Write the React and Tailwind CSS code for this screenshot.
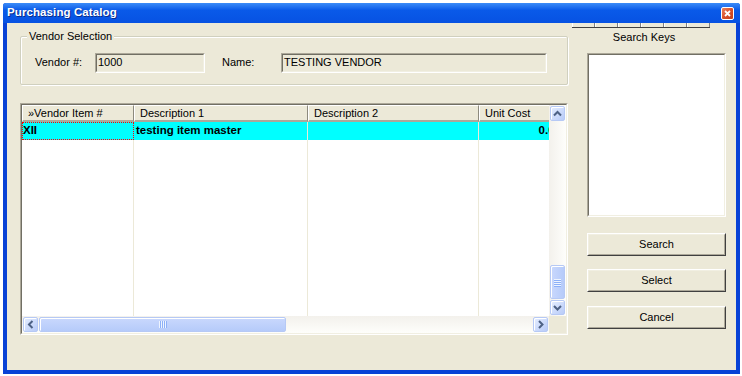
import React from "react";

function Chevron({ dir }) {
  const paths = {
    up: "M1 5.5 L4.5 2 L8 5.5",
    down: "M1 2 L4.5 5.5 L8 2",
    left: "M5.5 1 L2 4.5 L5.5 8",
    right: "M2 1 L5.5 4.5 L2 8",
  };
  const vertical = dir === "up" || dir === "down";
  return (
    <svg
      width={vertical ? 9 : 7}
      height={vertical ? 7 : 9}
      viewBox={vertical ? "0 0 9 7" : "0 0 7 9"}
    >
      <path d={paths[dir]} fill="none" stroke="#4D6185" strokeWidth="2" />
    </svg>
  );
}

function ScrollBtn({ dir }) {
  return (
    <div className="w-[17px] h-[17px] shrink-0 p-px">
      <div className="w-full h-full rounded-[2px] border border-[#B6C9F5] bg-linear-to-br from-[#E6EEFF] to-[#B8CBF8] flex items-center justify-center shadow-[inset_1px_1px_0_#fff]">
        <Chevron dir={dir} />
      </div>
    </div>
  );
}

function Grip({ vertical }) {
  return vertical ? (
    <div className="flex flex-col gap-px">
      {[0, 1, 2, 3].map((i) => (
        <div key={i} className="w-[7px] h-px bg-[#EEF4FE] shadow-[0_1px_0_#8CB0F8]" />
      ))}
    </div>
  ) : (
    <div className="flex flex-row gap-px">
      {[0, 1, 2, 3].map((i) => (
        <div key={i} className="w-px h-[7px] bg-[#EEF4FE] shadow-[1px_0_0_#8CB0F8]" />
      ))}
    </div>
  );
}

function Sunken({ className = "", children }) {
  return (
    <div
      className={
        "border border-t-[#ACA899] border-l-[#ACA899] border-b-white border-r-white " +
        className
      }
    >
      <div className="w-full h-full border border-t-[#716F64] border-l-[#716F64] border-b-[#F1EFE2] border-r-[#F1EFE2]">
        {children}
      </div>
    </div>
  );
}

function Field({ w, text }) {
  return (
    <Sunken className={w + " h-[20px]"}>
      <div className="h-full flex items-center pl-[1px] text-[11px] text-black leading-none">
        {text}
      </div>
    </Sunken>
  );
}

function Button({ label, mt }) {
  return (
    <div
      className={
        "w-[139px] h-[23px] border border-t-white border-l-white border-b-[#404040] border-r-[#404040] " +
        mt
      }
    >
      <div className="w-full h-full border border-t-[#F1EFE2] border-l-[#F1EFE2] border-b-[#ACA899] border-r-[#ACA899] flex items-center justify-center text-[11px] text-black">
        {label}
      </div>
    </div>
  );
}

const cols = [
  { w: "w-[112px]", head: "»Vendor Item #", val: "XII", focus: true },
  { w: "w-[174px]", head: "Description 1", val: "testing item master" },
  { w: "w-[171px]", head: "Description 2", val: "" },
  { w: "w-[85px]", head: "Unit Cost", val: "0.00", right: true, last: true },
];

export default function App() {
  return (
    <div className="w-[742px] h-[376px] bg-white pl-[3px] pt-[3px] overflow-hidden font-['Liberation_Sans',Arial,sans-serif]">
      <div className="w-[737px] h-[371px] bg-[#0842D6] flex flex-col rounded-t-[3px]">
        {/* Title bar */}
        <div className="h-[20px] shrink-0 flex items-center justify-between pl-[4px] pr-[6px] bg-linear-to-b from-[#3B8BF7] via-[#0A5AE9] via-35% to-[#0752E2] rounded-t-[3px]">
          <span className="text-white font-bold text-[11.5px] tracking-[0.1px] [text-shadow:1px_1px_0_#0A2E8C]">
            Purchasing Catalog
          </span>
          <div className="mt-px w-[13px] h-[13px] rounded-[2px] border border-white bg-linear-to-br from-[#E9835F] via-[#D9502A] to-[#C2401C] flex items-center justify-center">
            <svg width="7" height="7" viewBox="0 0 7 7">
              <path d="M1 1 L6 6 M6 1 L1 6" stroke="#fff" strokeWidth="1.8" />
            </svg>
          </div>
        </div>

        {/* Body */}
        <div className="flex-1 mx-[4px] mb-[4px] bg-[#ECE9D8] flex flex-row text-[11px] text-black">
          {/* Left column */}
          <div className="pl-[13px] pt-[13px] w-[561px] shrink-0 flex flex-col">
            {/* Group box */}
            <div className="relative w-[548px] h-[49px] border border-[#D0D0BF] shadow-[inset_1px_1px_0_#fff,1px_1px_0_#fff] rounded-[2px] flex items-center pl-[14px] pt-[4px]">
              <span className="absolute left-[6px] -top-[8px] px-[2px] bg-[#ECE9D8] leading-[14px]">
                Vendor Selection
              </span>
              <span className="w-[60px]">Vendor #:</span>
              <Field w="w-[110px]" text="1000" />
              <span className="ml-[17px] w-[59px]">Name:</span>
              <Field w="w-[266px]" text="TESTING VENDOR" />
            </div>

            {/* Grid */}
            <Sunken className="mt-[18px] w-[548px] h-[232px]">
              <div className="w-full h-full flex flex-col bg-white">
                <div className="flex flex-row h-[211px]">
                  <div className="w-[527px] h-full overflow-hidden flex flex-row">
                    {cols.map((c, i) => (
                      <div key={i} className={c.w + " shrink-0 h-full flex flex-col"}>
                        <div className="h-[17px] shrink-0 bg-[#ECE9D8] border-t border-l border-t-white border-l-white border-r border-r-[#8D8A7E] border-b-2 border-b-[#ACA899] pl-[5px] flex items-center whitespace-nowrap overflow-hidden leading-none">
                          {c.head}
                        </div>
                        <div
                          className={
                            "h-[18px] shrink-0 bg-[#00FFFF] font-bold text-[11.5px] whitespace-nowrap overflow-hidden flex items-center leading-none " +
                            (c.focus
                              ? "border border-dotted border-[#FF0000] pl-0 "
                              : "border-r border-r-[#ECE9D8] pl-[2px] ") +
                            (c.right ? "justify-end pr-[2px]" : "")
                          }
                        >
                          {c.val}
                        </div>
                        <div className="flex-1 border-r border-r-[#ECE9D8]" />
                      </div>
                    ))}
                  </div>
                  {/* Vertical scrollbar */}
                  <div className="w-[17px] h-full flex flex-col bg-linear-to-r from-[#F3F1EC] to-[#FEFEFB]">
                    <ScrollBtn dir="up" />
                    <div className="flex-1 flex flex-col justify-end">
                      <div className="h-[34px] mx-px rounded-[2px] border border-[#B6C9F5] bg-linear-to-r from-[#C9D8FD] to-[#B6CBFA] shadow-[inset_1px_1px_0_#fff] flex items-center justify-center">
                        <Grip vertical />
                      </div>
                    </div>
                    <ScrollBtn dir="down" />
                  </div>
                </div>
                {/* Horizontal scrollbar */}
                <div className="h-[17px] flex flex-row">
                  <div className="w-[527px] h-full flex flex-row bg-linear-to-b from-[#F3F1EC] to-[#FEFEFB]">
                    <ScrollBtn dir="left" />
                    <div className="flex-1 flex flex-row">
                      <div className="w-[247px] my-px rounded-[2px] border border-[#B6C9F5] bg-linear-to-b from-[#C9D8FD] to-[#B6CBFA] shadow-[inset_1px_1px_0_#fff] flex items-center justify-center">
                        <Grip />
                      </div>
                    </div>
                    <ScrollBtn dir="right" />
                  </div>
                  <div className="w-[17px] h-full bg-[#ECE9D8]" />
                </div>
              </div>
            </Sunken>
          </div>

          {/* Right column */}
          <div className="ml-[4px] flex flex-col">
            <div className="flex flex-row h-[5px] w-[138px] border-b border-b-[#404040]">
              {[0, 1, 2, 3, 4, 5].map((i) => (
                <div
                  key={i}
                  className="w-[23px] h-full border-l border-l-white border-r border-r-[#808080]"
                />
              ))}
            </div>
            <div className="mt-[2px] w-[144px] text-center leading-[14px]">Search Keys</div>
            <Sunken className="ml-[15px] mt-[9px] w-[139px] h-[164px]">
              <div className="w-full h-full bg-white" />
            </Sunken>
            <div className="ml-[15px] flex flex-col">
              <Button label="Search" mt="mt-[16px]" />
              <Button label="Select" mt="mt-[13px]" />
              <Button label="Cancel" mt="mt-[14px]" />
            </div>
          </div>
        </div>
      </div>
    </div>
  );
}
